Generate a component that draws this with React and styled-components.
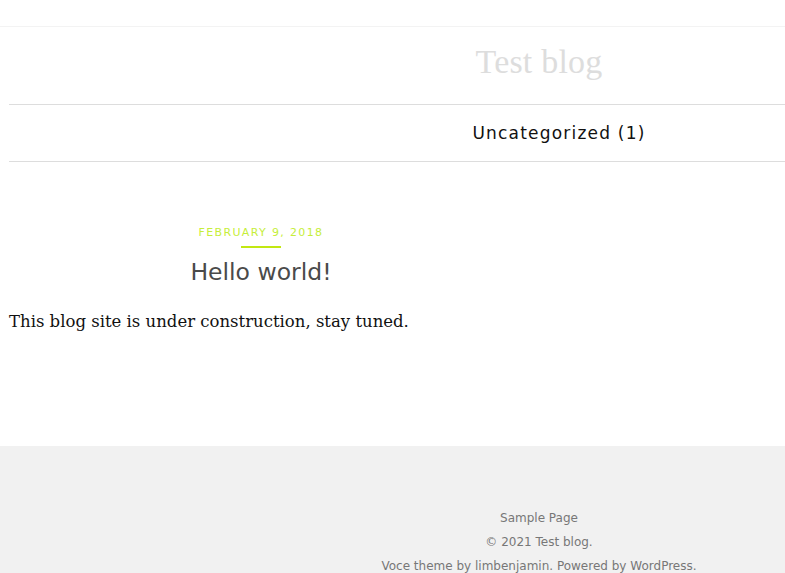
import React from 'react';
import styled, { createGlobalStyle } from 'styled-components';

const GlobalStyle = createGlobalStyle`
  html, body {
    margin: 0;
    padding: 0;
    background: #fff;
    overflow-x: hidden;
  }
  body {
    font-family: "DejaVu Serif", "Liberation Serif", serif;
  }
`;

const sans = `"DejaVu Sans", "Open Sans", sans-serif`;

const Page = styled.div`
  width: 1078px;
`;

const TopBar = styled.div`
  height: 26px;
  border-bottom: 1px solid #f3f3f3;
`;

const Masthead = styled.header`
  margin-left: 9px;
  width: 1060px;
`;

const Branding = styled.div`
  height: 77px;
  display: flex;
  align-items: center;
  justify-content: center;
  border-bottom: 1px solid #dddddd;
`;

const SiteTitle = styled.a`
  font-family: "Liberation Serif", serif;
  font-size: 34px;
  letter-spacing: 0.2px;
  color: #dddddd;
  text-decoration: none;
  margin-top: -7px;
`;

const NavList = styled.ul`
  list-style: none;
  margin: 0;
  padding: 0 0 0 40px;
  height: 56px;
  display: flex;
  align-items: center;
  justify-content: center;
  border-bottom: 1px solid #dddddd;
`;

const NavItem = styled.li`
  font-family: ${sans};
  font-size: 17px;
  letter-spacing: 1.2px;
  color: #111;
`;

const Content = styled.main`
  margin-left: 9px;
  width: 504px;
  padding-top: 63px;
  height: 221px;
`;

const PostHeader = styled.div`
  display: flex;
  flex-direction: column;
  align-items: center;
`;

const PostDate = styled.span`
  font-family: ${sans};
  font-size: 11px;
  letter-spacing: 1.35px;
  color: #c6ee3a;
  line-height: 16px;
`;

const DateRule = styled.span`
  display: block;
  width: 40px;
  height: 2px;
  background: #c2e812;
  margin: 5px 0 9px;
`;

const PostTitle = styled.h2`
  margin: 0;
  font-family: ${sans};
  font-weight: 400;
  font-size: 23.5px;
  line-height: 30px;
  color: #4a4a4a;
`;

const PostBody = styled.p`
  margin: 21px 0 0;
  font-size: 16.5px;
  line-height: 28px;
  color: #111;
`;

const Footer = styled.footer`
  background: #f1f1f1;
  padding-top: 60px;
  padding-bottom: 20px;
  display: flex;
  flex-direction: column;
  align-items: center;
`;

const FooterLine = styled.div`
  font-family: ${sans};
  font-size: 12px;
  line-height: 24px;
  color: #777;
`;

const FooterLink = styled.a`
  color: #777;
  text-decoration: none;
`;

export default function App() {
  return (
    <>
      <GlobalStyle />
      <Page>
        <TopBar />
        <Masthead>
          <Branding>
            <SiteTitle href="#">Test blog</SiteTitle>
          </Branding>
          <NavList>
            <NavItem>Uncategorized (1)</NavItem>
          </NavList>
        </Masthead>
        <Content>
          <PostHeader>
            <PostDate>FEBRUARY 9, 2018</PostDate>
            <DateRule />
            <PostTitle>Hello world!</PostTitle>
          </PostHeader>
          <PostBody>This blog site is under construction, stay tuned.</PostBody>
        </Content>
        <Footer>
          <FooterLine>
            <FooterLink href="#">Sample Page</FooterLink>
          </FooterLine>
          <FooterLine>© 2021 Test blog.</FooterLine>
          <FooterLine>
            Voce theme by <FooterLink href="#">limbenjamin</FooterLink>. Powered by{' '}
            <FooterLink href="#">WordPress</FooterLink>.
          </FooterLine>
        </Footer>
      </Page>
    </>
  );
}
